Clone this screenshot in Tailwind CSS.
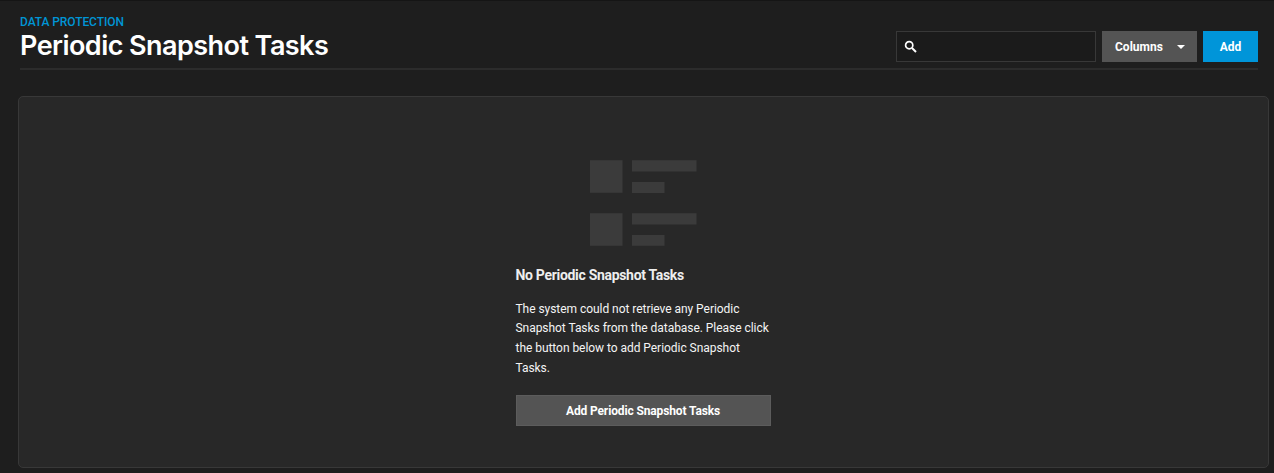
<!DOCTYPE html>
<html lang="en">
<head>
<meta charset="utf-8">
<title>Periodic Snapshot Tasks</title>
<script src="https://cdn.jsdelivr.net/npm/@tailwindcss/browser@4"></script>
</head>
<body class="h-[473px] overflow-hidden border-t border-[#151515] bg-[#1e1e1e] font-['Roboto',sans-serif] text-white">
<header class="mr-4 ml-5 flex h-[69px] items-end justify-between border-b-2 border-[#2c2c2c]">
  <div class="h-[53px] whitespace-nowrap">
    <p class="h-[12px] text-[12px] leading-[14px] tracking-[-0.08px] text-[#0095d5] font-medium">DATA PROTECTION</p>
    <h1 class="font-['Inter',sans-serif] text-[27px] leading-[37px] font-semibold tracking-[-0.56px]">Periodic Snapshot Tasks</h1>
  </div>
  <div class="mb-[6px] flex h-[31px]">
    <label class="flex w-[200px] items-center border border-[#383838] bg-[#1b1b1b] pl-[7px]">
      <svg class="size-[13px]" viewBox="0 0 13 13" fill="none" stroke="white"><circle cx="5.2" cy="5.2" r="3.6" stroke-width="1.7"/><path d="m8 8 4 4" stroke-width="2"/></svg>
    </label>
    <button class="ml-1.5 flex w-[95px] items-center justify-between bg-[#545454] pr-[12px] pl-[13px] text-[12px] font-bold">
      <span>Columns</span>
      <svg class="h-1 w-2" viewBox="0 0 8 4" fill="white"><path d="M0 0h8L4 4z"/></svg>
    </button>
    <button class="ml-1.5 w-[55px] bg-[#0095d9] text-[12px] font-bold">Add</button>
  </div>
</header>
<main class="mt-[26px] mr-[5px] ml-[18px] flex h-[372px] justify-center rounded-[5px] border border-[#383838] bg-[#282828] pt-[63px]">
  <section class="w-[256px]">
    <svg class="ml-[74px] h-[86px] w-[107px]" viewBox="0 0 107 86" fill="#3b3b3b"><path d="M0 .3h32.5v32.5H0zM42 .3h64.5v11.2H42zM42 22h32.5v11H42zM0 53.3h32.5v32.5H0zM42 53.3h64.5v11.2H42zM42 75h32.5v10.7H42z"/></svg>
    <h2 class="mt-5 text-[14px] leading-[18px] font-bold tracking-[-0.31px] whitespace-nowrap text-[#eeeeee]">No Periodic Snapshot Tasks</h2>
    <p class="mt-[15.5px] text-[12px] leading-[19.8px] tracking-[-0.045px] whitespace-nowrap text-[#f4f4f4]">The system could not retrieve any Periodic<br>Snapshot Tasks from the database. Please click<br>the button below to add Periodic Snapshot<br>Tasks.</p>
    <button class="mt-[16.5px] h-[31px] w-[255px] border border-[#5c5c5c] bg-[#545454] text-[12px] font-bold tracking-[-0.13px]">Add Periodic Snapshot Tasks</button>
  </section>
</main>
</body>
</html>
